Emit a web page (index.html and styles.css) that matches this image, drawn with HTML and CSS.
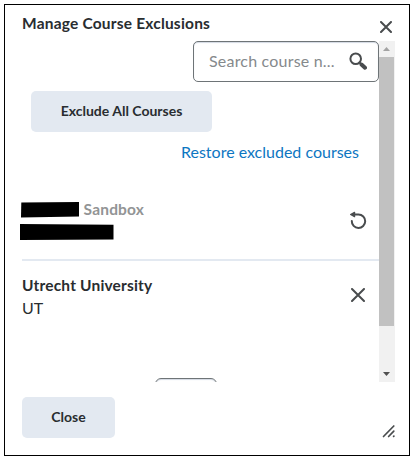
FILE: index.html
```html
<!DOCTYPE html>
<html lang="en">
<head>
<meta charset="utf-8">
<title>Manage Course Exclusions</title>
<link rel="stylesheet" href="styles.css">
</head>
<body>
<main class="dialog">
  <header class="dialog-header">
    <h1 class="title">Manage Course Exclusions</h1>
    <svg class="close-icon" viewBox="0 0 12 12"><path d="M1 1L11 11M11 1L1 11"/></svg>
  </header>
  <section class="viewport">
    <div class="content">
      <div class="search">
        <span class="placeholder">Search course n...</span>
        <svg class="search-icon" viewBox="0 0 18 18"><circle cx="6.7" cy="6.7" r="5.3"/><path class="neck" d="M10.5 10.5L13 13"/><path class="handle" d="M12.5 12.5L16 15.7"/></svg>
      </div>
      <button class="button exclude">Exclude All Courses</button>
      <a class="restore">Restore excluded courses</a>
      <article class="course excluded">
        <div class="course-text">
          <div class="name-line"><svg class="redact-name" viewBox="0 0 58 16"><path d="M.3 .5L58 0V14.5L0 15.5Z"/></svg><span class="course-name muted">Sandbox</span></div>
          <svg class="redact-code" viewBox="0 0 95 16"><path d="M.5 0L94.5 .8V15.5L0 16Z"/></svg>
        </div>
        <svg class="undo-icon" viewBox="0 0 18 18"><path class="line" d="M4 3.5H9.5A6.7 6.7 0 1 1 2.8 10"/><path class="arrow" d="M1.6 3.5L5.6 1.3V5.7Z"/></svg>
      </article>
      <article class="course">
        <div class="course-text">
          <div class="course-name">Utrecht University</div>
          <div class="course-code">UT</div>
        </div>
        <svg class="remove-icon" viewBox="0 0 14 14"><path d="M1 1L13 13M13 1L1 13"/></svg>
      </article>
      <div class="next-field"></div>
    </div>
    <div class="scrollbar">
      <svg class="scroll-arrow" viewBox="0 0 15 16"><path class="up" d="M4 10L7.5 6L11 10Z"/></svg>
      <div class="thumb"></div>
      <svg class="scroll-arrow bottom" viewBox="0 0 15 16"><path class="down" d="M4 6H11L7.5 10Z"/></svg>
    </div>
  </section>
  <footer class="dialog-footer">
    <button class="button close">Close</button>
    <svg class="resize" viewBox="0 0 14 14"><path d="M1.5 12.5L11.8 2M6.6 12.5L11.8 7.2M11.6 12.4L11.9 12.1"/></svg>
  </footer>
</main>
</body>
</html>
```
FILE: styles.css
```css
* { box-sizing: border-box; }
body { margin: 0; background: #fff; font-family: Lato, sans-serif; color: #292d30; }
svg { display: block; flex: none; fill: none; stroke: #494c4e; stroke-width: 2; stroke-linecap: round; }
.dialog { width: 406px; height: 452px; margin: 4px; border: 1px solid #000; display: flex; flex-direction: column; }
.dialog-header { height: 36px; padding: 8px 17px 0 17px; display: flex; justify-content: space-between; align-items: flex-start; }
.title { margin: 0; font-size: 15.5px; line-height: 20px; font-weight: 700; letter-spacing: .2px; white-space: nowrap; }
.close-icon { width: 12px; height: 12px; margin-top: 8px; }
.viewport { height: 341px; margin-left: 15px; display: flex; overflow: hidden; }
.content { width: 359px; height: 341px; padding-left: 2px; display: flex; flex-direction: column; overflow: hidden; }
.search { width: 186px; height: 41px; flex: none; align-self: flex-end; border: 1px solid #6e7477; border-radius: 5px; box-shadow: inset 0 1px 1px #d3d9e3; padding: 0 11px 2px 15px; display: flex; align-items: center; justify-content: space-between; }
.placeholder { font-size: 16px; letter-spacing: .2px; color: #85898c; white-space: nowrap; }
.search-icon { width: 18px; height: 18px; }
.handle { stroke-width: 4; }
.button { border: 0; border-radius: 5px; background: #e3e9f1; color: #292d30; font: 700 14px Lato, sans-serif; padding: 0 0 2px; height: 41px; flex: none; }
.exclude { width: 181px; margin: 9px 0 0 9px; letter-spacing: 0; }
.restore { align-self: flex-end; margin: 9px 20px 0 0; color: #0d76c2; font-size: 16px; line-height: 22px; white-space: nowrap; }
.course { display: flex; justify-content: space-between; flex: none; padding-right: 12px; }
.excluded { margin-top: 36px; height: 62px; border-bottom: 2px solid #e3e9f1; }
.course-text { display: flex; flex-direction: column; }
.name-line { display: flex; height: 22px; align-items: center; }
.redact-name, .redact-code { fill: #000; stroke: none; }
.redact-name { width: 58px; height: 16px; margin-left: -1px; }
.redact-code { width: 95px; height: 16px; margin-left: -3px; margin-top: 3px; }
.course-name { font-size: 15.5px; line-height: 22px; font-weight: 700; letter-spacing: .18px; }
.muted { color: #929495; margin: -2px 0 0 4.6px; }
.undo-icon { width: 18px; height: 18px; margin-top: 12px; }
.arrow { fill: #494c4e; stroke-width: 1.2; stroke-linejoin: round; }
.course-code { font-size: 16px; line-height: 22px; margin-top: 1px; }
.course + .course { padding-top: 13px; }
.remove-icon { width: 14px; height: 14px; margin: 14px 2px 0 0; }
.next-field { width: 62px; height: 40px; flex: none; margin: 59px 0 0 133px; border: 1px solid #6e7477; border-radius: 6px; box-shadow: inset 0 1px 1px #d3d9e3; }
.scrollbar { width: 16px; padding-right: 1px; background: #f1f1f1; display: flex; flex-direction: column; }
.scroll-arrow { width: 15px; height: 16px; stroke: none; }
.up { fill: #a3a3a3; }
.down { fill: #505050; }
.thumb { height: 269px; background: #c1c1c1; }
.bottom { margin-top: auto; }
.dialog-footer { flex: 1; padding: 15px 13px 0 17px; display: flex; justify-content: space-between; }
.close { width: 93px; }
.resize { width: 14px; height: 14px; margin-top: 27px; stroke-width: 1.7; }
```
